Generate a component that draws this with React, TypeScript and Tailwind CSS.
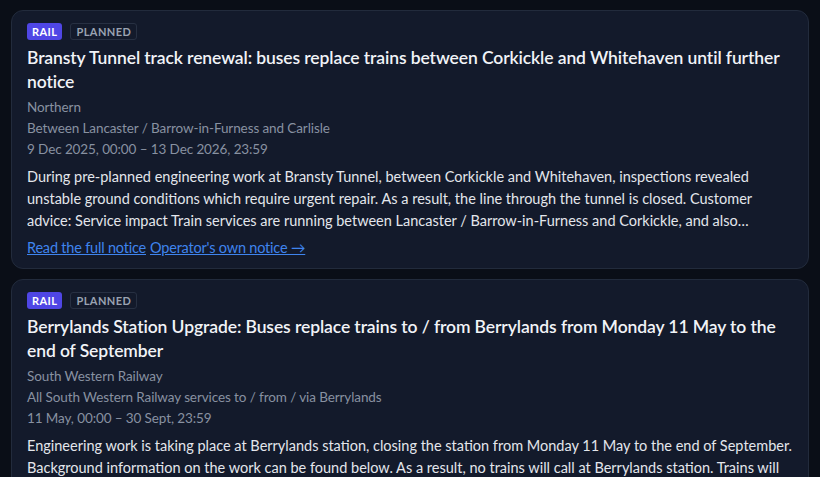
const notices = [
  {
    mode: "RAIL",
    status: "PLANNED",
    title:
      "Bransty Tunnel track renewal: buses replace trains between Corkickle and Whitehaven until further notice",
    operator: "Northern",
    route: "Between Lancaster / Barrow-in-Furness and Carlisle",
    when: "9 Dec 2025, 00:00 – 13 Dec 2026, 23:59",
    body:
      "During pre-planned engineering work at Bransty Tunnel, between Corkickle and Whitehaven, inspections revealed unstable ground conditions which require urgent repair. As a result, the line through the tunnel is closed. Customer advice: Service impact Train services are running between Lancaster / Barrow-in-Furness and Corkickle, and also between Whitehaven and Carlisle. Buses replace trains between Corkickle and Whitehaven.",
  },
  {
    mode: "RAIL",
    status: "PLANNED",
    title:
      "Berrylands Station Upgrade: Buses replace trains to / from Berrylands from Monday 11 May to the end of September",
    operator: "South Western Railway",
    route: "All South Western Railway services to / from / via Berrylands",
    when: "11 May, 00:00 – 30 Sept, 23:59",
    body:
      "Engineering work is taking place at Berrylands station, closing the station from Monday 11 May to the end of September. Background information on the work can be found below. As a result, no trains will call at Berrylands station. Trains will continue to run through the station without stopping.",
  },
];

function NoticeCard({ n }: { n: (typeof notices)[number] }) {
  return (
    <article className="rounded-xl border border-[#222b3c] bg-[#131a2b] px-[15px] pt-3 pb-[9px]">
      <div className="flex items-center gap-2">
        <span className="rounded-[3px] bg-[#4f46e5] px-[5px] text-[11px] font-bold leading-[17px] tracking-[0.04em] text-white">
          {n.mode}
        </span>
        <span className="rounded-[3px] border border-[#273042] px-[5px] text-[11px] font-bold leading-[15px] tracking-[0.04em] text-[#9aa3b2]">
          {n.status}
        </span>
      </div>
      <h2 className="mt-[6px] text-[17.5px] font-semibold leading-[24px] tracking-[-0.1px] text-[#f1f3f7]">
        {n.title}
      </h2>
      <div className="mt-[3px] text-[13.5px] leading-[21px] tracking-[-0.1px] text-[#8891a1]">
        <p>{n.operator}</p>
        <p>{n.route}</p>
        <p>{n.when}</p>
      </div>
      <p className="mt-[6px] line-clamp-3 text-[14.5px] leading-[22px] text-[#e3e6ec]">
        {n.body}
      </p>
      <div className="mt-[5px] flex gap-1 text-[14.5px] leading-[22px] tracking-[-0.2px] text-[#3f84ee]">
        <a href="#" className="underline">
          Read the full notice
        </a>
        <a href="#" className="underline">
          Operator's own notice →
        </a>
      </div>
    </article>
  );
}

export default function App() {
  return (
    <div
      className="min-h-screen bg-[#0a0e17] px-[11px] pt-[10px]"
      style={{ fontFamily: "Lato, 'Noto Sans', sans-serif" }}
    >
      <div className="flex flex-col gap-[10px]">
        {notices.map((n, i) => (
          <NoticeCard key={i} n={n} />
        ))}
      </div>
    </div>
  );
}
